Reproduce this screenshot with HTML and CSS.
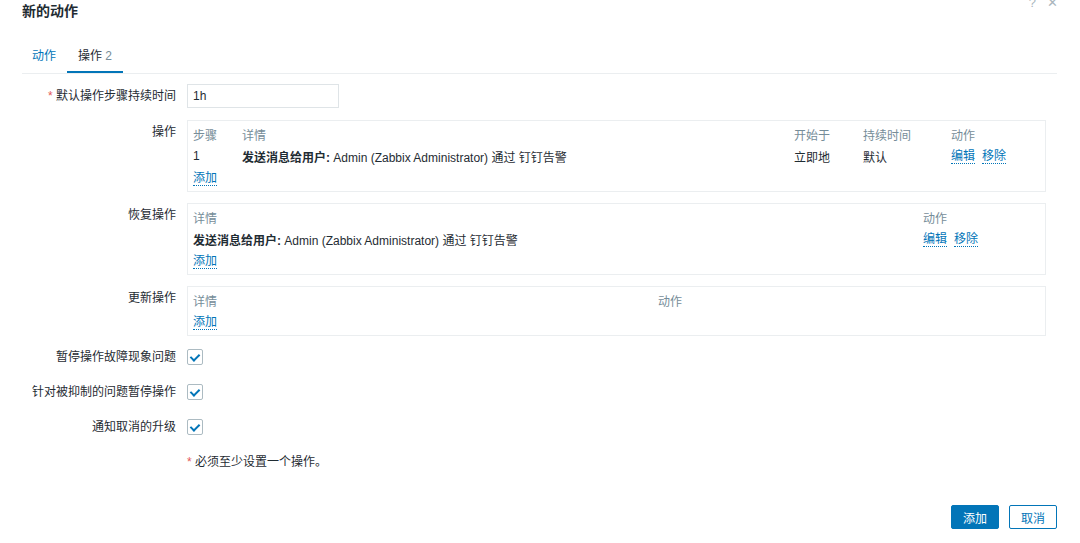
FILE: index.html
```html
<!DOCTYPE html>
<html>

<head>
  <meta charset="utf-8">
  <meta name="viewport" content="width=device-width">
  <title>新的动作</title>
  <link rel="stylesheet" href="styles.css">
</head>

<body>
  <div class="dialog">
    <div class="dialog-head">
      <h4>新的动作</h4>
      <div class="head-btns">
        <span class="head-btn">?</span>
        <span class="head-btn close">&#x2715;</span>
      </div>
    </div>

    <ul class="tabs">
      <li class="tab">动作</li>
      <li class="tab active">操作 <span class="count">2</span></li>
    </ul>

    <div class="form">
      <div class="form-row center">
        <label class="form-label"><span class="req">*</span> 默认操作步骤持续时间</label>
        <div class="form-field"><input class="text-input" type="text" value="1h"></div>
      </div>

      <div class="form-row">
        <label class="form-label top">操作</label>
        <div class="form-field">
          <div class="op-box op-steps">
            <span class="th">步骤</span>
            <span class="th">详情</span>
            <span class="th">开始于</span>
            <span class="th">持续时间</span>
            <span class="th">动作</span>

            <span>1</span>
            <span><b>发送消息给用户:</b> Admin (Zabbix Administrator) 通过 钉钉告警</span>
            <span>立即地</span>
            <span>默认</span>
            <span class="actions"><a class="link">编辑</a><a class="link">移除</a></span>

            <span class="full"><a class="link">添加</a></span>
          </div>
        </div>
      </div>

      <div class="form-row">
        <label class="form-label top">恢复操作</label>
        <div class="form-field">
          <div class="op-box op-recovery">
            <span class="th">详情</span>
            <span class="th">动作</span>

            <span><b>发送消息给用户:</b> Admin (Zabbix Administrator) 通过 钉钉告警</span>
            <span class="actions"><a class="link">编辑</a><a class="link">移除</a></span>

            <span class="full"><a class="link">添加</a></span>
          </div>
        </div>
      </div>

      <div class="form-row">
        <label class="form-label top">更新操作</label>
        <div class="form-field">
          <div class="op-box op-update">
            <span class="th">详情</span>
            <span class="th">动作</span>

            <span class="full"><a class="link">添加</a></span>
          </div>
        </div>
      </div>

      <div class="form-row center check-row first-check">
        <label class="form-label">暂停操作故障现象问题</label>
        <div class="form-field"><span class="checkbox"></span></div>
      </div>

      <div class="form-row center check-row">
        <label class="form-label">针对被抑制的问题暂停操作</label>
        <div class="form-field"><span class="checkbox"></span></div>
      </div>

      <div class="form-row center check-row">
        <label class="form-label">通知取消的升级</label>
        <div class="form-field"><span class="checkbox"></span></div>
      </div>

      <div class="form-row center">
        <span></span>
        <div class="form-field note"><span class="req">*</span> 必须至少设置一个操作。</div>
      </div>
    </div>

    <div class="dialog-foot">
      <button class="btn primary">添加</button>
      <button class="btn alt">取消</button>
    </div>
  </div>
</body>

</html>
```

FILE: styles.css
```css
body {
  margin: 0;
  background-color: #ffffff;
  color: #1f2c33;
  font-family: "Liberation Sans", "Noto Sans CJK SC", sans-serif;
  font-size: 12px;
}

.dialog {
  width: 1080px;
  height: 543px;
  overflow: hidden;
}

.dialog-head {
  display: flex;
  justify-content: space-between;
  height: 40px;
  padding: 0 22px;
}

.dialog-head h4 {
  margin: 0;
  font-size: 14px;
  line-height: 22px;
  font-weight: bold;
}

.head-btns {
  display: flex;
  gap: 11px;
  margin-top: -4px;
  color: #aab6bd;
  font-size: 13px;
  line-height: 14px;
}

/* tabs */
.tabs {
  display: flex;
  margin: 0 23px 0 22px;
  padding: 0;
  list-style: none;
  border-bottom: 1px solid #ebeef0;
}

.tab {
  padding: 8px 10px 7px;
  line-height: 16px;
  color: #0275b8;
  border-bottom: 2px solid transparent;
}

.tab.active {
  margin-left: 1px;
  padding: 8px 11px 7px;
  color: #1f2c33;
  border-bottom-color: #0275b8;
}

.count {
  color: #768d99;
}

/* form */
.form {
  display: flex;
  flex-direction: column;
  padding: 10px 34px 0 0;
}

.form-row {
  display: grid;
  grid-template-columns: 176px 1fr;
  column-gap: 11px;
  margin-bottom: 11px;
}

.form-row.center {
  align-items: center;
}

.form-label {
  text-align: right;
  line-height: 16px;
}

.form-label.top {
  padding-top: 4px;
}

.req {
  color: #e45959;
}

.text-input {
  width: 152px;
  height: 24px;
  box-sizing: border-box;
  margin: 0;
  padding: 0 5px;
  border: 1px solid #dfe4e7;
  font-family: inherit;
  font-size: 12px;
  color: #1f2c33;
}

.form-row:first-child {
  margin-bottom: 12px;
}

.op-box {
  display: grid;
  padding: 2px 5px;
  border: 1px solid #ebeef0;
  grid-auto-rows: 22px;
  align-items: center;
}

.op-steps {
  grid-template-columns: 49px 552px 69px 88px 1fr;
}

.op-recovery {
  grid-template-columns: 730px 1fr;
}

.op-update {
  grid-template-columns: 465px 1fr;
}

.th {
  color: #768d99;
}

.full {
  grid-column: 1 / -1;
}

.actions {
  display: flex;
  gap: 7px;
}

.link {
  color: #0275b8;
  border-bottom: 1px dotted #0275b8;
  line-height: 14px;
  cursor: pointer;
}

.form-row:nth-child(4) {
  margin-bottom: 9px;
}

.check-row {
  height: 24px;
}

.checkbox {
  display: block;
  position: relative;
  width: 16px;
  height: 16px;
  box-sizing: border-box;
  border: 1px solid #acbbc2;
  border-radius: 2px;
}

/* check mark */
.checkbox::after {
  content: "";
  position: absolute;
  left: 4px;
  top: 2px;
  width: 4px;
  height: 7px;
  border-right: 2px solid #0275b8;
  border-bottom: 2px solid #0275b8;
  transform: rotate(45deg);
}

.note {
  line-height: 24px;
}

/* footer */
.dialog-foot {
  display: flex;
  justify-content: flex-end;
  gap: 10px;
  padding: 20px 23px 0 0;
}

.btn {
  width: 48px;
  height: 24px;
  padding: 0;
  border-radius: 2px;
  font-family: inherit;
  font-size: 12px;
  cursor: pointer;
}

.btn.primary {
  background-color: #0275b8;
  border: 1px solid #0275b8;
  color: #ffffff;
}

.btn.alt {
  background-color: #ffffff;
  border: 1px solid #0275b8;
  color: #0275b8;
}
```
